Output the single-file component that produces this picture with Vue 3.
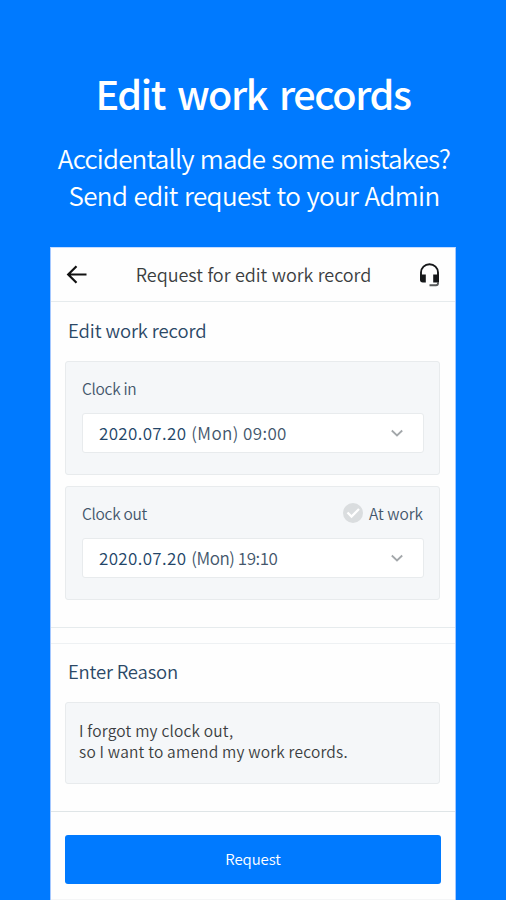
<script setup>
const records = [
  { label: 'Clock in', date: '2020.07.20', rest: '(Mon) 09:00', atWork: false, tone: 'wide' },
  { label: 'Clock out', date: '2020.07.20', rest: '(Mon) 19:10', atWork: true, tone: 'tight' },
]
</script>

<template>
  <main class="page">
    <h1 class="title">Edit work records</h1>
    <div class="subtitle">
      <p class="s1">Accidentally made some mistakes?</p>
      <p class="s2">Send edit request to your Admin</p>
    </div>
    <div class="screen">
      <header class="bar">
        <svg class="back" width="22" height="22" viewBox="0 0 22 22">
          <path d="M10.500 2.200 2.200 10.500l8.300 8.300M2.500 10.500H20.500" fill="none" stroke="#111" stroke-width="2.2" />
        </svg>
        <h2 class="bar-title">Request for edit work record</h2>
        <svg class="support" width="22" height="26" viewBox="0 0 22 26">
          <path d="M2 13v-2.500a8.500 8.300 0 0 1 17 0V20" fill="none" stroke="#151719" stroke-width="1.9" />
          <path d="M1 12.500h5.800v8H3.800Q1 20.500 1 17.800zM14.200 12.500H20v8h-5.800z" fill="#151719" />
          <path d="M19 20v1.200q0 2-2 2H10.500" fill="none" stroke="#55585a" stroke-width="1.900" />
        </svg>
      </header>

      <section class="records">
        <h3 class="heading">Edit work record</h3>
        <div v-for="r in records" :key="r.label" class="record">
          <div class="record-top">
            <span class="label">{{ r.label }}</span>
            <span v-if="r.atWork" class="at-work">
              <svg width="20" height="20" viewBox="0 0 20 20">
                <circle cx="10" cy="10" r="10" fill="#dadddf" />
                <path d="m4.500 9.500 4 4L16 6" fill="none" stroke="#fff" stroke-width="2.300" />
              </svg>
              <span>At work</span>
            </span>
          </div>
          <div class="select">
            <span class="value"><span class="date">{{ r.date }}</span><span :class="r.tone">{{ r.rest }}</span></span>
            <svg width="12" height="8" viewBox="0 0 12 8">
              <path d="m.8 1.500 5.200 5 5.200-5" fill="none" stroke="#a3a7aa" stroke-width="1.800" />
            </svg>
          </div>
        </div>
      </section>

      <section class="reason">
        <h3 class="heading h-reason">Enter Reason</h3>
        <div class="note">
          <p>I forgot my clock out,</p>
          <p>so I want to amend my work records.</p>
        </div>
      </section>

      <footer class="footer">
        <button class="submit">Request</button>
      </footer>
    </div>
  </main>
</template>

<style>
body {
  margin: 0;
  background: #007aff;
}
</style>

<style scoped>
* {
  box-sizing: border-box;
}
.page {
  height: 900px;
  overflow: hidden;
  background: #007aff;
  display: flex;
  flex-direction: column;
  align-items: center;
  font-family: "Noto Sans CJK KR", "Noto Sans", sans-serif;
  white-space: nowrap;
}
h1, h2, h3, p {
  margin: 0;
  font-weight: inherit;
}
.title {
  margin-top: 63px;
  height: 60px;
  line-height: 60px;
  font-size: 39.5px;
  font-weight: 500;
  letter-spacing: -1.4px;
  word-spacing: 4.5px;
  color: #fff;
}
.subtitle {
  margin-top: 16px;
  height: 76px;
  text-align: center;
  font-size: 26px;
  line-height: 37px;
  font-weight: 350;
  color: #fff;
}
.s1 {
  padding-left: 2px;
  letter-spacing: -0.8px;
  word-spacing: 0.9px;
}
.s2 {
  padding-left: 2px;
  letter-spacing: -0.65px;
  word-spacing: 1.1px;
}
.screen {
  width: 406px;
  margin-top: 32px;
  flex: 1;
  background: #fefefe;
  border-left: 1px solid #a5c8ff;
  border-right: 1px solid #a5c8ff;
  border-top: 1px solid #c5dcff;
  display: flex;
  flex-direction: column;
}
.bar {
  height: 54px;
  display: flex;
  align-items: center;
  justify-content: space-between;
  padding: 0 14px 0 15px;
  border-bottom: 1px solid #e6ebed;
}
.bar-title {
  padding-bottom: 2px;
  font-size: 18px;
  font-weight: 350;
  letter-spacing: -0.05px;
  word-spacing: 0.6px;
  color: #3a3d40;
}
.records {
  height: 326px;
  padding: 14px 15px 0 14px;
  border-bottom: 1px solid #e6ebed;
}
.heading {
  height: 28px;
  line-height: 28px;
  padding-left: 3px;
  font-size: 18.5px;
  font-weight: 350;
  letter-spacing: -0.1px;
  color: #2b4866;
}
.h-reason {
  letter-spacing: -0.2px;
}
.record {
  height: 114px;
  margin-top: 11px;
  padding: 12px 15px 0 16px;
  border: 1px solid #e8ebed;
  border-radius: 3px;
  background: #f5f7f9;
}
.heading + .record {
  margin-top: 17px;
}
.record-top {
  display: flex;
  align-items: center;
  justify-content: space-between;
  height: 27px;
  font-size: 15.5px;
  font-weight: 350;
  color: #43566b;
}
.label {
  letter-spacing: -0.3px;
}
.at-work {
  display: flex;
  align-items: center;
  gap: 6px;
  padding-right: 1px;
}
.select {
  height: 40px;
  margin-top: 12px;
  padding: 0 20px 0 16px;
  border: 1px solid #e8ebed;
  border-radius: 3px;
  background: #fff;
  display: flex;
  align-items: center;
  justify-content: space-between;
  font-size: 17px;
  font-weight: 350;
  color: #43566b;
}
.value {
  display: flex;
  gap: 5px;
  padding-bottom: 2px;
}
.date {
  letter-spacing: 0.35px;
  color: #234568;
}
.wide {
  letter-spacing: 0.4px;
}
.tight {
  letter-spacing: -0.45px;
}
.reason {
  margin-top: 15px;
  height: 169px;
  padding: 13px 15px 0 14px;
  border-top: 1px solid #eef1f3;
  border-bottom: 1px solid #dfe5e7;
}
.note {
  height: 82px;
  margin-top: 17px;
  padding: 17px 13px;
  border: 1px solid #e8ebed;
  border-radius: 3px;
  background: #f5f7f9;
  font-size: 15.5px;
  line-height: 21px;
  font-weight: 350;
  letter-spacing: 0.2px;
  color: #3a3d40;
}
.footer {
  flex: 1;
  padding: 23px 14px 0;
  border-bottom: 1px solid #f4f5f6;
}
.submit {
  display: block;
  width: 100%;
  height: 49px;
  padding: 0 0 2px;
  border: 0;
  border-radius: 3px;
  background: #007aff;
  font: 350 15px/47px "Noto Sans CJK KR", sans-serif;
  letter-spacing: -0.1px;
  color: #fff;
}
</style>
